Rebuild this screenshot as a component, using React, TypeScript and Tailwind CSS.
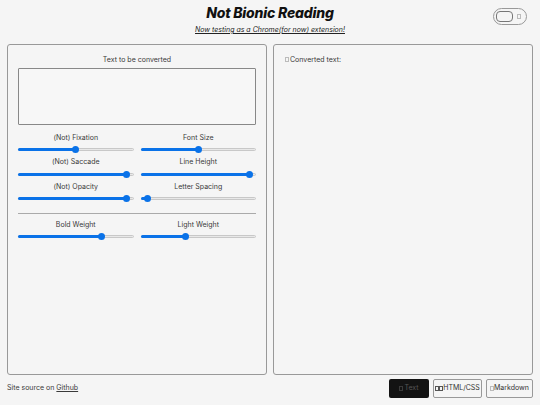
import React from "react";

const Tofu = ({ cls = "border-[#bbb]" }: { cls?: string }) => (
  <span className={"inline-block w-[4px] h-[5px] border-[0.5px] align-middle " + cls} />
);

const Slider = ({ v }: { v: number }) => (
  <div className="relative h-[8px] w-full flex items-center">
    <div className="h-[3px] w-full rounded-full bg-[#e8e8e8] border-[0.5px] border-[#c8c8c8]" />
    <div className="absolute left-0 h-[3px] rounded-full bg-[#0a72e8]" style={{ width: `${v}%` }} />
    <div
      className="absolute w-[7px] h-[7px] rounded-full bg-[#0a72e8]"
      style={{ left: `calc(${v}% - 3.5px)` }}
    />
  </div>
);

const Cell = ({ label, v }: { label: string; v: number }) => (
  <div className="flex flex-col">
    <div className="h-[9px] leading-[9px] text-center text-[7px] text-[#3a3a3a]">{label}</div>
    <div className="mt-[4px]">
      <Slider v={v} />
    </div>
  </div>
);

export default function App() {
  return (
    <div
      className="w-[540px] h-[405px] bg-[#f5f5f5] flex flex-col text-[#222]"
      style={{ fontFamily: "Inter, 'Liberation Sans', sans-serif" }}
    >
      <header className="relative h-[44px] flex flex-col items-center">
        <h1 className="mt-[4px] text-[14px] leading-[18px] font-extrabold italic text-[#111] tracking-[-0.2px]">
          Not Bionic Reading
        </h1>
        <a className="mt-[3px] text-[7px] leading-[9px] italic underline text-[#222]">
          Now testing as a Chrome(for now) extension!
        </a>
        <div className="absolute right-[13px] top-[8px] w-[34px] h-[17px] rounded-full border border-[#999] flex items-center px-[2px]">
          <div className="w-[17px] h-[11px] rounded-[4px] border border-[#777]" />
          <div className="flex-1 flex justify-center">
            <Tofu />
          </div>
        </div>
      </header>

      <main className="flex gap-[6px] px-[7px] h-[331px]">
        <section className="w-[260px] h-full border border-[#999] rounded-[3px] px-[10px] pt-[10px]">
          <div className="h-[9px] leading-[9px] text-center text-[7px] text-[#3a3a3a]">Text to be converted</div>
          <div className="mt-[4px] h-[57px] border border-[#888] rounded-[1px] bg-[#f7f7f7]" />
          <div className="mt-[7.5px] grid grid-cols-2 gap-x-[7px] gap-y-[3.5px]">
            <Cell label="(Not) Fixation" v={50} />
            <Cell label="Font Size" v={50} />
            <Cell label="(Not) Saccade" v={94} />
            <Cell label="Line Height" v={94} />
            <Cell label="(Not) Opacity" v={94} />
            <Cell label="Letter Spacing" v={6} />
          </div>
          <div className="mt-[10px] h-px bg-[#aaa]" />
          <div className="mt-[6px] grid grid-cols-2 gap-x-[7px]">
            <Cell label="Bold Weight" v={72} />
            <Cell label="Light Weight" v={39} />
          </div>
        </section>
        <section className="w-[260px] h-full border border-[#999] rounded-[3px] px-[11px] pt-[10px]">
          <div className="h-[9px] leading-[9px] text-[7px] text-[#3a3a3a] flex items-center gap-[1px]">
            <Tofu />
            <span>Converted text:</span>
          </div>
        </section>
      </main>

      <footer className="flex items-center justify-between px-[7px] mt-[4px]">
        <div className="text-[7px] text-[#3a3a3a]">
          Site source on <a className="underline">Github</a>
        </div>
        <div className="flex gap-[4px]">
          <button className="w-[40px] h-[19px] rounded-[2px] bg-[#131313] text-[7px] text-[#555] flex items-center justify-center gap-[1px]">
            <Tofu cls="border-[#3a3a3a]" />
            Text
          </button>
          <button className="w-[49px] h-[19px] rounded-[2px] border border-[#999] text-[7px] text-[#333] flex items-center justify-center">
            <Tofu cls="border-[#555]" />
            <Tofu cls="border-[#555]" />
            HTML/CSS
          </button>
          <button className="w-[47px] h-[19px] rounded-[2px] border border-[#999] text-[7px] text-[#333] flex items-center justify-center">
            <Tofu />
            Markdown
          </button>
        </div>
      </footer>
    </div>
  );
}
